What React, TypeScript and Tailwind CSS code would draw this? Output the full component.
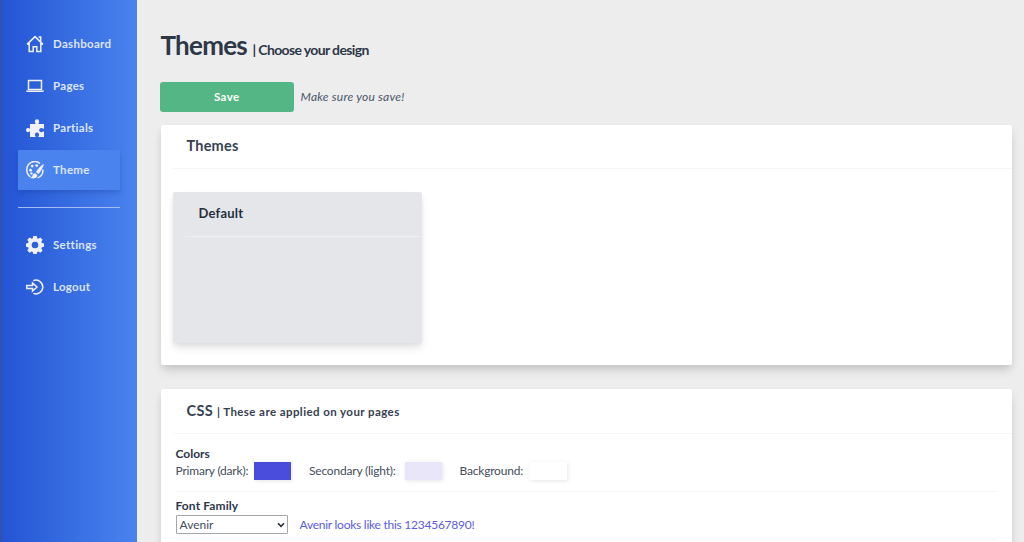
import type { ReactNode } from 'react';

function Icon({ children }: { children: ReactNode }) {
  return (
    <svg viewBox="0 0 18 18" className="h-[18px] w-[18px] shrink-0 text-[#f0f0f2]" fill="none" stroke="currentColor" strokeWidth="1.5">
      {children}
    </svg>
  );
}

const HomeIcon = () => (
  <Icon>
    <path d="M1 9.400 9 1.600l8 7.800M3.200 8v8.500h4v-4.800h3.600v4.800h4V8M12.600 2h2.100v4.400" />
  </Icon>
);

const LaptopIcon = () => (
  <Icon>
    <path d="M2.500 3.500h13v9h-13z" />
    <path d="M0 13.500h18v.7l-1.300.9H1.300L0 14.200z" fill="currentColor" stroke="none" />
  </Icon>
);

const PuzzleIcon = () => (
  <Icon>
    <path
      fill="currentColor"
      stroke="none"
      d="M4 5h5.100c.5 0 .5-.5.2-.9C8.800 3.500 8.800 2.900 8.800 2.500a2.200 2.200 0 0 1 4.400 0c0 .5-.1 1-.5 1.600-.3.400-.3.900.2.900H18v4.300c0 .6-.5.600-.9.300-2.200-1.600-4 0-4 1.500s1.800 3.100 4 1.500c.4-.3.900-.3.900.3V18h-5.200c-.5 0-.6-.4-.3-.8.5-.6.6-1 .6-1.500a2.100 2.100 0 0 0-4.200 0c0 .5.100.9.600 1.500.3.400.2.800-.3.800H4v-4.900c0-.6-.4-.7-.8-.4-1.500 1.100-3.200.2-3.200-1.600s1.700-2.700 3.200-1.600c.4.300.8.200.8-.4z"
    />
  </Icon>
);

const PaletteIcon = () => (
  <Icon>
    <path d="M13.900 2.300A8.100 8.100 0 0 0 .8 9c0 2.900 1.500 5.400 3.600 6.800M16.800 8.700c.7 3.800-1.800 7.200-5.300 8.200" />
    <g fill="currentColor" stroke="none">
      <circle cx="6.200" cy="5.100" r="1.450" />
      <circle cx="10.700" cy="4.600" r="1.450" />
      <circle cx="4.600" cy="9.200" r="1.450" />
      <circle cx="5.400" cy="12.400" r="1.200" />
      <path d="M18 2.800c-2.700 1.400-6.100 4.800-8 8.300l2.400 2c2.500-2.600 4.900-6.500 5.600-10.300zM9.200 12.200c-1.800 0-2.500 1.200-2.700 2.200-.3 1.300-1 1.900-2.500 2.400 3.100 1.400 7.200.7 7.400-2.900z" />
    </g>
  </Icon>
);

const GearIcon = () => (
  <Icon>
    <path
      fill="currentColor"
      stroke="none"
      fillRule="evenodd"
      d="M7.300 0h3.400l.5 2.200 1.100.5 2-1.200 2.300 2.300-1.200 2 .5 1.200 2.100.4v3.300l-2.100.5-.5 1.200 1.200 2-2.300 2.300-2-1.200-1.100.5-.5 2.100H7.300l-.5-2.100-1.200-.5-1.900 1.200-2.400-2.300 1.300-2-.5-1.200-2.100-.5V7.400L2.100 7l.5-1.200-1.300-2 2.400-2.300 1.900 1.200 1.200-.5zM9 5.700a3.300 3.300 0 1 0 0 6.600 3.300 3.300 0 0 0 0-6.600z"
    />
  </Icon>
);

const LogoutIcon = () => (
  <Icon>
    <path d="M.8 7.400h5.700V4.900L11 9l-4.500 4.100v-2.500H.8z" />
    <path d="M7.300 2.600a6.900 6.900 0 1 1 0 12.800" />
  </Icon>
);

function NavItem({ icon, label, active }: { icon: ReactNode; label: string; active?: boolean }) {
  return (
    <a
      className={
        active
          ? 'flex h-10 items-center gap-[9px] rounded-[1px] bg-[#4a83ee] pl-2 shadow-[0_3px_4px_rgba(20,50,140,0.25)]'
          : 'flex h-10 items-center gap-[9px] pl-2'
      }
    >
      {icon}
      <span className="text-[11.5px] font-bold tracking-[0.3px] text-[#dbe4fa]">{label}</span>
    </a>
  );
}

function Swatch({ label, color, className }: { label: string; color: string; className: string }) {
  return (
    <div className={'flex items-center justify-between ' + className}>
      <span className="tracking-[-0.2px] whitespace-nowrap">{label}</span>
      <span className={'h-[18px] w-[37px] shadow-[1px_1px_4px_rgba(0,0,0,0.1)] ' + color} />
    </div>
  );
}

const card = 'rounded-[2px] bg-white shadow-[0_7px_10px_-2px_rgba(0,0,0,0.13),0_3px_6px_rgba(0,0,0,0.06)]';

export default function App() {
  return (
    <div className="flex h-[542px] overflow-hidden bg-[#ededed] font-['Lato','Liberation_Sans',sans-serif] text-[#2d3748]">
      <aside className="w-[137px] shrink-0 border-l border-[#3c5484] bg-gradient-to-r from-[#2454d4] to-[#4a83ee] pt-[23.5px] pr-[17px] pl-[17px]">
        <nav className="flex flex-col gap-[2px]">
          <NavItem icon={<HomeIcon />} label="Dashboard" />
          <NavItem icon={<LaptopIcon />} label="Pages" />
          <NavItem icon={<PuzzleIcon />} label="Partials" />
          <NavItem icon={<PaletteIcon />} label="Theme" active />
        </nav>
        <hr className="mt-[17.5px] mb-[17px] border-[#a4bcf3]" />
        <nav className="flex flex-col gap-[2px]">
          <NavItem icon={<GearIcon />} label="Settings" />
          <NavItem icon={<LogoutIcon />} label="Logout" />
        </nav>
      </aside>

      <main className="flex-1 pt-[29px] pr-3 pl-[23.5px]">
        <h1 className="flex h-8 items-baseline font-bold">
          <span className="w-[92px] text-[26px] leading-8 tracking-[-0.75px]">Themes</span>
          <span className="text-[14px] tracking-[-0.63px]">| Choose your design</span>
        </h1>

        <div className="mt-[21px] -ml-[0.5px] flex h-[30px] items-center gap-[7px]">
          <button className="h-[30px] w-[133.5px] rounded-[3px] bg-[#55b685] text-[11.5px] font-bold tracking-[0.4px] text-white">Save</button>
          <em className="text-[12px] tracking-[0.22px] text-[#4a5568]">Make sure you save!</em>
        </div>

        <section className={'mt-[13px] h-60 pl-3 ' + card}>
          <h2 className="h-11 border-b border-[#f4f5f6] pl-[14px] text-[14.5px] leading-[42px] font-bold tracking-[0.2px] text-[#374151]">Themes</h2>
          <div className="mt-[23px] h-[151px] w-[249px] rounded-[2px] bg-[#e5e6ea] pl-3 shadow-[0_6px_9px_-1px_rgba(0,0,0,0.1),0_2px_4px_rgba(0,0,0,0.05)]">
            <h3 className="h-[45px] border-b border-[#edeff2] pl-[14px] text-[13px] leading-[43px] font-bold tracking-[0.2px] text-[#252f3f]">Default</h3>
          </div>
        </section>

        <section className={'mt-6 h-60 pl-3 ' + card}>
          <h2 className="flex h-[45px] items-baseline gap-[4px] border-b border-[#f4f5f6] pl-[14px] leading-[43px] font-bold text-[#374151]">
            <span className="text-[14.5px] tracking-[0.3px]">CSS</span>
            <span className="text-[11.5px] tracking-[0.42px]">| These are applied on your pages</span>
          </h2>
          <div className="mr-[15px] ml-[3px] text-[12px] text-[#454d5b]">
            <div className="h-[58px] border-b border-[#f7f7f8] pt-3">
              <h3 className="h-4 leading-4 font-bold text-[#2d3748]">Colors</h3>
              <div className="flex h-[18px] items-center gap-[18px]">
                <Swatch label="Primary (dark):" color="bg-[#4a4ddb]" className="w-[115.5px]" />
                <Swatch label="Secondary (light):" color="bg-[#e8e6f8]" className="w-[132.5px]" />
                <Swatch label="Background:" color="bg-white" className="w-[107px]" />
              </div>
            </div>
            <div className="h-12 border-b border-[#f4f4f6] pt-[6px]">
              <h3 className="h-[17px] leading-4 font-bold tracking-[0.1px] text-[#2d3748]">Font Family</h3>
              <div className="flex h-[19px] items-center">
                <div className="flex h-[19px] w-[112px] items-center justify-between rounded-[1px] border border-[#a3a6ad] pr-[2px] pl-[3px]">
                  <span>Avenir</span>
                  <svg viewBox="0 0 8 6" className="h-[6px] w-2" fill="none" stroke="#222b38" strokeWidth="1.6">
                    <path d="m1 1.300 3 3 3-3" />
                  </svg>
                </div>
                <span className="ml-3 tracking-[-0.25px] text-[#5b5ce0]">Avenir looks like this 1234567890!</span>
              </div>
            </div>
          </div>
        </section>
      </main>
    </div>
  );
}
